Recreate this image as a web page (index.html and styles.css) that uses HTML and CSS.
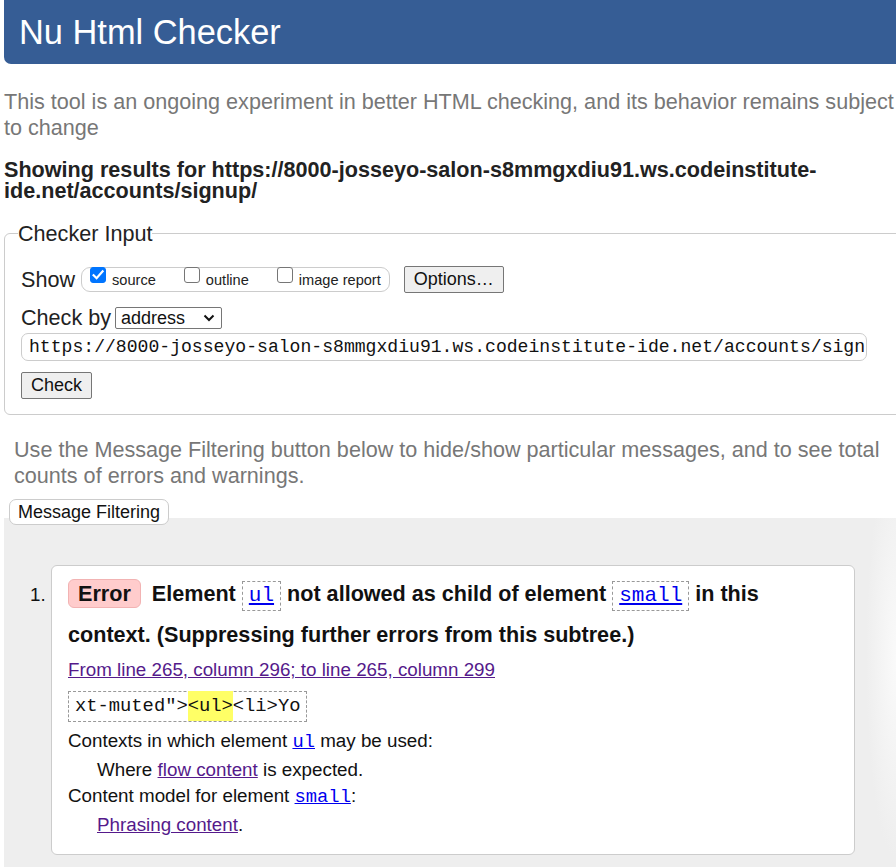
FILE: index.html
```html
<!DOCTYPE html>
<html lang="en">
<head>
<meta charset="utf-8">
<title>Nu Html Checker</title>
<link rel="stylesheet" href="styles.css">
</head>
<body>
<header class="banner"><h1 class="banner-title">Nu Html Checker</h1></header>
<p class="intro">This tool is an ongoing experiment in better HTML checking, and its behavior remains subject to change</p>
<h2 class="results">Showing results for https://8000-josseyo-salon-s8mmgxdiu91.ws.codeinstitute-ide.net/accounts/signup/</h2>
<fieldset class="input-box">
  <legend class="legend">Checker Input</legend>
  <div class="row show-row">
    <span class="row-label">Show</span>
    <span class="opts">
      <label class="opt"><span class="cb cb-on"><svg width="16" height="16" viewBox="0 0 16 16"><path d="M3.6 8.2 L6.6 11.2 L12.6 4.4" fill="none" stroke="#fff" stroke-width="2.2" stroke-linecap="square"/></svg></span><span class="opt-text">source</span></label>
      <label class="opt"><span class="cb"></span><span class="opt-text">outline</span></label>
      <label class="opt"><span class="cb"></span><span class="opt-text">image report</span></label>
    </span>
    <button class="btn options-btn" type="button">Options…</button>
  </div>
  <div class="row by-row">
    <span class="row-label">Check by</span>
    <span class="select"><span class="select-text">address</span><svg class="chev" width="12" height="8" viewBox="0 0 12 8"><path d="M1.5 1.5 L6 6 L10.5 1.5" fill="none" stroke="#111" stroke-width="2"/></svg></span>
  </div>
  <div class="url">https://8000-josseyo-salon-s8mmgxdiu91.ws.codeinstitute-ide.net/accounts/signup/</div>
  <button class="btn check-btn" type="button">Check</button>
</fieldset>
<p class="filter-note">Use the Message Filtering button below to hide/show particular messages, and to see total counts of errors and warnings.</p>
<button class="filter-btn" type="button">Message Filtering</button>
<section class="results-area">
  <ol class="messages">
    <li class="msg">
      <p class="msg-text"><span class="badge">Error</span> Element <code class="code-box"><a class="code-link" href="#">ul</a></code> not allowed as child of element <code class="code-box"><a class="code-link" href="#">small</a></code> in this context. (Suppressing further errors from this subtree.)</p>
      <p class="location"><a class="visited" href="#">From line 265, column 296; to line 265, column 299</a></p>
      <div class="extract"><code class="extract-code">xt-muted"&gt;<b class="hl">&lt;ul&gt;</b>&lt;li&gt;Yo</code></div>
      <dl class="details">
        <dt class="dt">Contexts in which element <a class="code-link small-code" href="#">ul</a> may be used:</dt>
        <dd class="dd">Where <a class="visited" href="#">flow content</a> is expected.</dd>
        <dt class="dt">Content model for element <a class="code-link small-code" href="#">small</a>:</dt>
        <dd class="dd"><a class="visited" href="#">Phrasing content</a>.</dd>
      </dl>
    </li>
  </ol>
</section>
</body>
</html>
```
FILE: styles.css
```css
html, body {
  overflow-x: hidden;
}
body {
  margin: 0;
  font-family: "Liberation Sans", Arial, sans-serif;
  color: #111;
  background: #fff;
}
.banner {
  margin-left: 4px;
  height: 64px;
  background: #365d95;
  border-bottom-left-radius: 7px;
  padding-left: 15px;
}
.banner-title {
  margin: 0;
  font-size: 34.4px;
  font-weight: normal;
  line-height: 64px;
  color: #fff;
}
.intro {
  margin: 25px 0 0 4px;
  font-size: 21.6px;
  line-height: 26px;
  color: #777;
}
.results {
  margin: 18px 0 0 4px;
  font-size: 21.6px;
  line-height: 21px;
  font-weight: bold;
  color: #222;
}
.input-box {
  margin: 20px -30px 0 4px;
  border: 1px solid #ccc;
  border-radius: 6px;
  padding: 4px 16px 15px 16px;
}
.legend {
  font-size: 21.6px;
  padding: 0;
  margin-left: -3px;
  line-height: 25px;
  color: #222;
}
.row {
  display: flex;
  align-items: center;
}
.row-label {
  font-size: 21.6px;
  color: #222;
}
.show-row {
  margin-top: 16px;
  height: 27px;
}
.opts {
  display: flex;
  align-items: flex-start;
  margin-left: 6px;
  height: 23px;
  border: 1px solid #ccc;
  border-radius: 9px;
  padding: 0 8px 0 8px;
  gap: 28px;
}
.opt {
  display: flex;
  align-items: flex-start;
  font-size: 14.6px;
  color: #222;
}
.cb {
  flex: none;
  display: block;
  box-sizing: border-box;
  width: 16px;
  height: 16px;
  margin: -1px 6px 0 0;
  border: 1px solid #767676;
  border-radius: 3px;
  background: #fff;
}
.cb-on {
  background: #0075ff;
  border-color: #0075ff;
}
.cb-on svg {
  display: block;
  margin: -1px;
}
.opt-text {
  padding-top: 4px;
  line-height: 17px;
}
.btn {
  font-family: "Liberation Sans", Arial, sans-serif;
  font-size: 18px;
  color: #111;
  background: #efefef;
  border: 1px solid #767676;
  border-radius: 2px;
  padding: 0 9px;
  height: 27px;
  line-height: 25px;
}
.options-btn {
  margin-left: 14px;
  width: 100px;
}
.by-row {
  margin-top: 13px;
  height: 24px;
}
.select {
  display: inline-flex;
  align-items: center;
  justify-content: space-between;
  margin-left: 4px;
  width: 107px;
  height: 22px;
  box-sizing: border-box;
  border: 1px solid #767676;
  border-radius: 2px;
  padding: 0 6px 0 5px;
  font-size: 18px;
}
.select-text {
  line-height: 20px;
}
.url {
  margin-top: 3px;
  width: 846px;
  height: 28px;
  box-sizing: border-box;
  border: 1px solid #ccc;
  border-radius: 7px;
  padding: 0 7px;
  font-family: "Liberation Mono", "Courier New", monospace;
  font-size: 18.1px;
  line-height: 26px;
  white-space: nowrap;
  overflow: hidden;
  color: #111;
}
.check-btn {
  margin-top: 11px;
  width: 71px;
  display: block;
}
.filter-note {
  margin: 22px 0 0 14px;
  font-size: 21.6px;
  line-height: 26px;
  color: #777;
}
.filter-btn {
  position: relative;
  display: block;
  margin: 10px 0 -7px 9px;
  height: 26px;
  width: 160px;
  padding: 0;
  font-family: "Liberation Sans", Arial, sans-serif;
  font-size: 18px;
  color: #111;
  background: #fff;
  border: 1px solid #ccc;
  border-radius: 7px;
}
.results-area {
  margin-left: 4px;
  background: #eee;
  background-image: radial-gradient(ellipse 30px 200px at 100% 40%, #fafafa, #eee);
  padding: 47px 0 12px 0;
}
.messages {
  margin: 0;
  padding: 0 41px 0 47px;
  font-size: 18.8px;
}
.msg {
  background: #fff;
  border: 1px solid #ccc;
  border-radius: 6px;
  padding: 7px 16px 16px 16px;
  color: #111;
}
.msg::marker {
  font-size: 18.8px;
}
.msg-text {
  margin: 0;
  font-size: 21.6px;
  font-weight: bold;
  line-height: 41px;
}
.badge {
  display: inline-block;
  background: #fcc;
  border: 1px solid #f2b3b3;
  border-radius: 6px;
  padding: 0 9px;
  line-height: 27px;
  margin-right: 5px;
}
.code-box {
  display: inline-block;
  border: 1px dashed #999;
  padding: 0 6px;
  line-height: 28px;
  font-family: "Liberation Mono", "Courier New", monospace;
  font-weight: normal;
  font-size: 21px;
}
.code-link {
  color: #00e;
  font-family: "Liberation Mono", "Courier New", monospace;
}
.small-code {
  font-size: 18.8px;
}
.visited {
  color: #551a8b;
}
.location {
  margin: 2px 0 0 0;
  line-height: 26px;
}
.extract {
  margin-top: 8px;
  display: inline-block;
  border: 1px dashed #999;
  padding: 0 6px;
  height: 29px;
}
.extract-code {
  font-family: "Liberation Mono", "Courier New", monospace;
  font-size: 18.8px;
  line-height: 29px;
}
.hl {
  font-weight: normal;
  background: #ff6;
  padding: 4px 0;
}
.details {
  margin: 6px 0 0 0;
}
.dt {
  line-height: 26px;
}
.dd {
  margin: 2px 0 0 29px;
  line-height: 26px;
}
```
